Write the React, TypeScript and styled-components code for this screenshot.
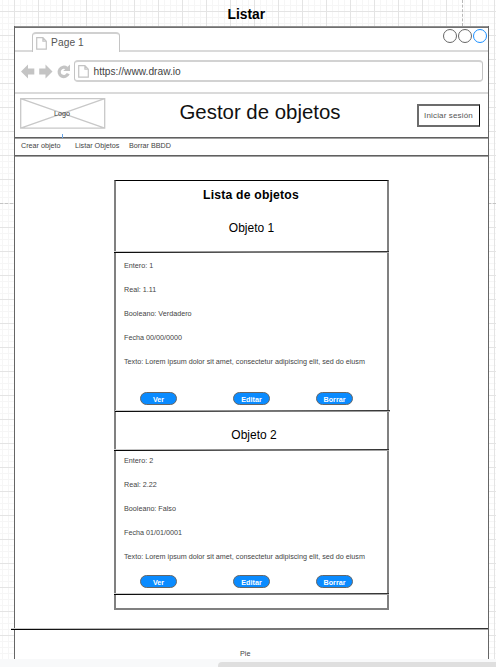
import React from "react";
import styled, { createGlobalStyle } from "styled-components";

const GlobalStyle = createGlobalStyle`
  * { box-sizing: border-box; }
  body { margin: 0; overflow: hidden; font-family: "Liberation Sans", Arial, sans-serif; }
`;

const Canvas = styled.div`
  position: relative;
  width: 496px;
  height: 667px;
  overflow: hidden;
  background:
    repeating-linear-gradient(90deg, #e4e4e4 0 1px, transparent 1px 24px) 14px 0 / 24px 24px,
    repeating-linear-gradient(180deg, #e4e4e4 0 1px, transparent 1px 24px) 0 11px / 24px 24px,
    repeating-linear-gradient(90deg, #f6f6f6 0 1px, transparent 1px 6px) 2px 0 / 6px 6px,
    repeating-linear-gradient(180deg, #f6f6f6 0 1px, transparent 1px 6px) 0 5px / 6px 6px,
    #fff;
`;

const PageBreak = styled.div<{ $vertical?: boolean }>`
  position: absolute;
  ${(p) =>
    p.$vertical
      ? "left: 462px; top: 0; height: 26px; border-left: 1px dashed #b8b8b8;"
      : "left: 0; top: 203px; width: 496px; border-top: 1px dashed #c4c4c4;"}
`;

const Caption = styled.h1`
  margin: 0;
  height: 26px;
  padding-left: 227.5px;
  font-size: 13.8px;
  line-height: 30px;
`;

const Browser = styled.main`
  position: relative;
  width: 475px;
  height: 633px;
  margin-left: 14px;
  background: #fff;
  border: solid #666;
  border-width: 0 1px;
`;

const Rule = styled.div<{ $a?: string; $b?: string }>`
  height: 2px;
  background: linear-gradient(
    ${(p) => p.$a ?? "#606060"} 0 1px,
    ${(p) => p.$b ?? "#a0a0a0"} 1px 2px
  );
`;

/* A line that climbs by one pixel over its length. */
const SlopedRule = styled.div<{ $l?: number; $r?: number; $gap?: number }>`
  height: 2px;
  flex: none;
  position: relative;
  margin-top: ${(p) => p.$gap ?? 0}px;
  margin-left: ${(p) => -(p.$l ?? 0)}px;
  margin-right: ${(p) => -(p.$r ?? 0)}px;
  background:
    linear-gradient(90deg, #d0d0d0, #808080 50%, #303030) 0 0 / 100% 1px no-repeat,
    linear-gradient(90deg, #000, #707070 50%, #a8a8a8) 0 1px / 100% 1px no-repeat;
`;

const TabStrip = styled.div`
  display: flex;
  justify-content: space-between;
  height: 24px;
  border-bottom: 2px solid #dadada;
`;

const Tab = styled.div`
  display: flex;
  align-items: center;
  gap: 4px;
  width: 88px;
  height: 20px;
  margin: 4px 0 0 17px;
  padding-left: 3px;
  border: 1px solid #c4c4c4;
  border-top: 2px solid #d0d0d0;
  border-bottom: 0;
  border-radius: 4px 4px 0 0;
  background: #fff;
  color: #555;
  font-size: 10.2px;
  letter-spacing: 0.1px;
  line-height: 18px;
`;

const WindowButtons = styled.div`
  display: flex;
  gap: 1px;
  padding: 1px 1px 0 0;
`;

const Dot = styled.span<{ $color?: string }>`
  width: 14px;
  height: 14px;
  border: 1px solid ${(p) => p.$color ?? "#666"};
  border-radius: 50%;
`;

const Toolbar = styled.div`
  display: flex;
  align-items: center;
  height: 40px;
  padding: 0 5px 2px 6px;
`;

const Nav = styled.svg`
  display: block;
  width: 53px;
  height: 20px;
  flex: none;
  overflow: visible;
`;

const Address = styled.div`
  display: flex;
  flex: 1;
  align-items: center;
  gap: 4.5px;
  height: 22px;
  padding-left: 3px;
  border: solid;
  border-width: 2px 1px;
  border-color: #d2d2d2 #c4c4c4;
  border-radius: 4px;
  color: #444;
  font-size: 10.2px;
`;

const PageGlyph = styled.svg`
  width: 11px;
  height: 13px;
  flex: none;
`;

const Header = styled.header`
  display: flex;
  justify-content: space-between;
  height: 43px;
  padding: 4px 8px 0 5px;
`;

const Logo = styled.div`
  position: relative;
  width: 86px;
  height: 31px;
  display: grid;
  place-items: center;
  font-size: 7.2px;
  color: #444;
  svg { position: absolute; inset: 0; }
  span { position: relative; margin-right: 2px; }
`;

const Title = styled.h2`
  margin: -2px 0 0 -2px;
  width: 162px;
  white-space: nowrap;
  font-size: 20.4px;
  font-weight: 400;
  line-height: 32px;
  color: #111;
`;

const Login = styled.button`
  width: 63px;
  height: 23px;
  margin-top: 6px;
  padding: 0 1px 0 0;
  border: 2px solid #6c6c6c;
  border-right: 1px solid #000;
  background: #fff;
  color: #555;
  font: 8px "Liberation Sans", Arial, sans-serif;
  letter-spacing: 0.15px;
  white-space: nowrap;
`;

const Menu = styled.nav`
  display: flex;
  height: 16px;
  padding-left: 6px;
  font-size: 7.2px;
  line-height: 14px;
  color: #444;
  position: relative;
`;

const MenuItem = styled.span<{ $w: number }>`
  width: ${(p) => p.$w}px;
  white-space: nowrap;
`;

const Anchor = styled.i`
  position: absolute;
  left: 47px;
  top: -5px;
  width: 1px;
  height: 4px;
  background: #67a5e8;
`;

const Panel = styled.section`
  display: flex;
  flex-direction: column;
  width: 275px;
  height: 430px;
  margin: 23px 0 0 99px;
  border: solid #808080;
  border-width: 1px 2px 2px;
  border-top-color: #000;
`;

const PanelTitle = styled.h3`
  margin: 0;
  height: 32px;
  padding-right: 1px;
  font-size: 12.2px;
  line-height: 28px;
  letter-spacing: 0.2px;
  text-align: center;
`;

const ObjectTitle = styled.h4<{ $h: number; $lh: number; $dx?: number }>`
  margin: 0;
  height: ${(p) => p.$h}px;
  padding-left: ${(p) => p.$dx ?? 0}px;
  font-size: 12px;
  font-weight: 400;
  line-height: ${(p) => p.$lh}px;
  text-align: center;
`;

const Fields = styled.div<{ $top: number; $h: number }>`
  height: ${(p) => p.$h}px;
  padding: ${(p) => p.$top}px 0 0 8px;
  font-size: 7.2px;
  color: #444;
  white-space: nowrap;
`;

const Field = styled.div`
  height: 24px;
  line-height: 10px;
`;

const Actions = styled.div<{ $h: number }>`
  display: flex;
  height: ${(p) => p.$h}px;
  padding-left: 24px;
`;

const Action = styled.button<{ $gap?: number }>`
  width: 37px;
  height: 13px;
  margin: 0 ${(p) => p.$gap ?? 0}px 0 0;
  padding: 1px 0 0;
  border: 1px solid #666;
  border-radius: 7px;
  background: #0a8bff;
  color: #fff;
  font: bold 7.2px/9px "Liberation Sans", Arial, sans-serif;
`;

const Footer = styled.footer`
  height: 29px;
  padding-left: 225px;
  font-size: 7.2px;
  line-height: 47px;
  color: #444;
`;

const Scrollbar = styled.div`
  height: 8px;
  padding: 3px 0 0 218px;
  background: #f8f9fa;
  &::after {
    content: "";
    display: block;
    height: 5px;
    border-radius: 4px 0 0 0;
    background: #dfdfdf;
  }
`;

const PageIcon = () => (
  <PageGlyph viewBox="0 0 11 13" fill="none" stroke="#c4c4c4" strokeWidth="1.2">
    <path d="M.7.7h6.2l3.4 3.5v8H.7zM6.9.7v3.5h3.4" />
  </PageGlyph>
);

const ObjectActions = ({ height }: { height: number }) => (
  <Actions $h={height}>
    <Action $gap={56}>Ver</Action>
    <Action $gap={46}>Editar</Action>
    <Action>Borrar</Action>
  </Actions>
);

const lorem = "Texto: Lorem ipsum dolor sit amet, consectetur adipiscing elit, sed do eiusm";
const first = ["Entero: 1", "Real: 1.11", "Booleano: Verdadero", "Fecha 00/00/0000", lorem];
const second = ["Entero: 2", "Real: 2.22", "Booleano: Falso", "Fecha 01/01/0001", lorem];

export default function App() {
  return (
    <Canvas>
      <GlobalStyle />
      <PageBreak $vertical />
      <PageBreak />
      <Caption>Listar</Caption>
      <Browser>
        <Rule $a="#909090" $b="#707070" />
        <TabStrip>
          <Tab><PageIcon />Page 1</Tab>
          <WindowButtons>
            <Dot /><Dot /><Dot $color="#1a8fff" />
          </WindowButtons>
        </TabStrip>
        <Toolbar>
          <Nav viewBox="0 0 53 20" fill="#c4c4c4">
            <path d="M0 10.500l7-7v4h6.300v6H7v4z" />
            <path d="M31.500 10.500l-7-7v4h-6.300v6h6.300v4z" />
            <path d="M45.800 7.200A4.700 4.700 0 1 0 47.200 12.700" fill="none" stroke="#c4c4c4" strokeWidth="3.2" />
            <path d="M49 3.500v6.500h-6.800z" />
          </Nav>
          <Address><PageIcon />https://www.draw.io</Address>
        </Toolbar>
        <Rule $a="#dadada" $b="#dadada" />
        <Header>
          <Logo>
            <svg width="86" height="31" fill="none" stroke="#c8c8c8" strokeWidth="1.3">
              <path d="M.7.7h84v29.500h-84zM.7.7l84 29.500M84.700.7l-84 29.500" />
            </svg>
            <span>Logo</span>
          </Logo>
          <Title>Gestor de objetos</Title>
          <Login>Iniciar sesión</Login>
        </Header>
        <Rule />
        <Menu>
          <Anchor />
          <MenuItem $w={54}>Crear objeto</MenuItem>
          <MenuItem $w={54}>Listar Objetos</MenuItem>
          <MenuItem $w={60}>Borrar BBDD</MenuItem>
        </Menu>
        <Rule />
        <Panel>
          <PanelTitle>Lista de objetos</PanelTitle>
          <ObjectTitle $h={38} $lh={30}>Objeto 1</ObjectTitle>
          <SlopedRule $l={2} $r={2} />
          <Fields $top={8} $h={139}>
            {first.map((t) => <Field key={t}>{t}</Field>)}
          </Fields>
          <ObjectActions height={18} />
          <SlopedRule $l={1} $r={3} />
          <ObjectTitle $h={37} $lh={46} $dx={5}>Objeto 2</ObjectTitle>
          <SlopedRule $l={2} $r={2} />
          <Fields $top={5} $h={124}>
            {second.map((t) => <Field key={t}>{t}</Field>)}
          </Fields>
          <ObjectActions height={18} />
          <SlopedRule $l={2} $r={2} />
        </Panel>
        <SlopedRule $l={4} $gap={18} />
        <Footer>Pie</Footer>
      </Browser>
      <Scrollbar />
    </Canvas>
  );
}
